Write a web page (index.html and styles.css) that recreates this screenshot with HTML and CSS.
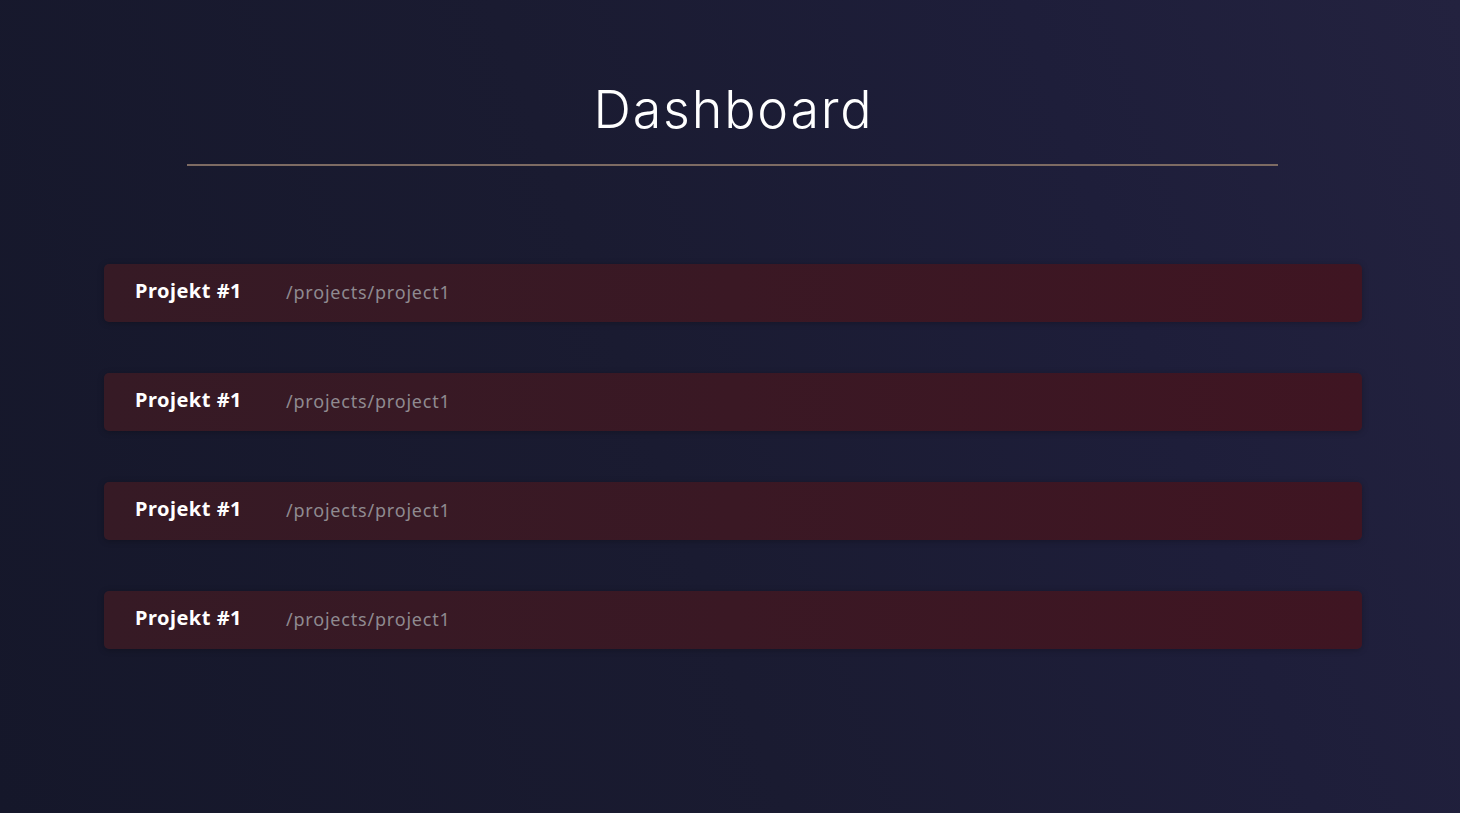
FILE: index.html
```html
<!DOCTYPE html>
<html lang="de">
<head>
<meta charset="utf-8">
<title>Dashboard</title>
<link rel="stylesheet" href="styles.css">
</head>
<body>
<main class="page">
  <header class="header">
    <h1 class="title">Dashboard</h1>
    <div class="rule"></div>
  </header>
  <section class="list">
    <a class="card" href="#"><span class="name">Projekt #1</span><span class="path">/projects/project1</span></a>
    <a class="card" href="#"><span class="name">Projekt #1</span><span class="path">/projects/project1</span></a>
    <a class="card" href="#"><span class="name">Projekt #1</span><span class="path">/projects/project1</span></a>
    <a class="card" href="#"><span class="name">Projekt #1</span><span class="path">/projects/project1</span></a>
  </section>
</main>
</body>
</html>
```

FILE: styles.css
```css
html, body {
  margin: 0;
  height: 100%;
}
body {
  background: linear-gradient(70deg, #15172a 0%, #1a1b31 45%, #1e1e3a 75%, #23223f 100%);
  font-family: "Noto Sans", "DejaVu Sans", sans-serif;
  color: #fff;
}
.page {
  min-height: 100vh;
  display: flex;
  flex-direction: column;
}
.header {
  padding-top: 78px;
  display: flex;
  flex-direction: column;
  align-items: center;
}
.title {
  margin: 0 0 0 7px;
  font-family: "Inter", "Open Sans", sans-serif;
  font-weight: 300;
  font-size: 52px;
  line-height: 64px;
  letter-spacing: 1.8px;
  color: #ffffff;
}
.rule {
  margin-top: 22px;
  margin-left: 5px;
  width: 1091px;
  height: 2px;
  background: #7d6b63;
}
.list {
  margin-top: 98px;
  margin-left: 104px;
  width: 1258px;
  display: flex;
  flex-direction: column;
  gap: 51px;
}
.card {
  height: 58px;
  display: flex;
  align-items: center;
  padding-left: 31px;
  border-radius: 5px;
  background: linear-gradient(90deg, #361a25 0%, #3a1824 50%, #3f1522 100%);
  box-shadow: 0 1px 6px rgba(0, 0, 0, 0.25);
  text-decoration: none;
}
.name {
  width: 151px;
  font-weight: 700;
  font-size: 20px;
  color: #ffffff;
  letter-spacing: 0.5px;
  margin-top: -5px;
}
.path {
  font-size: 18px;
  color: #8f8a90;
  letter-spacing: 0.8px;
  margin-top: -3px;
}
```
